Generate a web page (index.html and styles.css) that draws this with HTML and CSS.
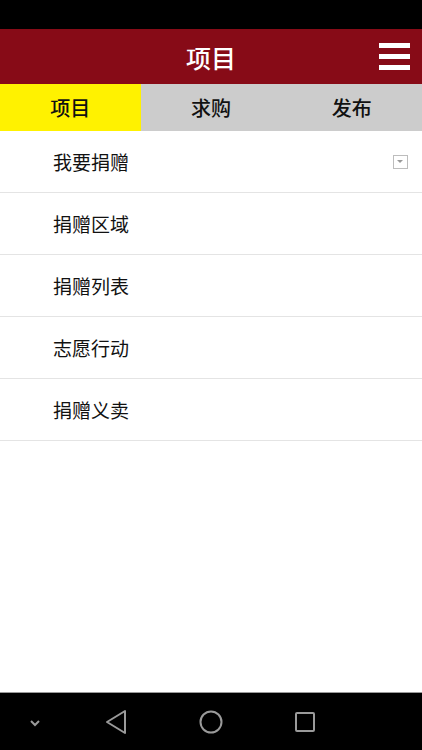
FILE: index.html
```html
<!DOCTYPE html>
<html lang="zh-CN">
<head>
    <meta charset="UTF-8">
    <meta name="viewport" content="width=device-width, initial-scale=1.0">
    <title>项目</title>
    <link rel="stylesheet" href="styles.css">
</head>
<body>
    <div class="status-bar"></div>

    <div class="header">
        <h1>项目</h1>
        <div class="menu-btn">
            <span></span>
            <span></span>
            <span></span>
        </div>
    </div>

    <div class="tabs">
        <div class="tab active">项目</div>
        <div class="tab">求购</div>
        <div class="tab">发布</div>
    </div>

    <ul class="list">
        <li>
            <span>我要捐赠</span>
            <span class="dropdown"></span>
        </li>
        <li><span>捐赠区域</span></li>
        <li><span>捐赠列表</span></li>
        <li><span>志愿行动</span></li>
        <li><span>捐赠义卖</span></li>
    </ul>

    <div class="nav-bar">
        <svg class="nav-icon nav-hide" width="40" height="40" viewBox="0 0 40 40">
            <polyline points="16,19 20,23 24,19" fill="none" stroke="#9a9a9a" stroke-width="2"/>
        </svg>
        <svg class="nav-icon nav-back" width="40" height="40" viewBox="0 0 40 40">
            <polygon points="28,9 28,31 10,20" fill="none" stroke="#9a9a9a" stroke-width="2" stroke-linejoin="round"/>
        </svg>
        <svg class="nav-icon" width="40" height="40" viewBox="0 0 40 40">
            <circle cx="20" cy="20" r="10.5" fill="none" stroke="#9a9a9a" stroke-width="2"/>
        </svg>
        <svg class="nav-icon" width="40" height="40" viewBox="0 0 40 40">
            <rect x="11" y="11" width="18" height="18" rx="1" fill="none" stroke="#9a9a9a" stroke-width="2"/>
        </svg>
    </div>
</body>
</html>
```

FILE: styles.css
```css
html, body {
    margin: 0;
    padding: 0;
}
body {
    font-family: "Noto Sans CJK SC", "Noto Sans", sans-serif;
    background-color: #fff;
    color: #111;
    width: 422px;
    height: 750px;
    display: flex;
    flex-direction: column;
    overflow: hidden;
}
.status-bar {
    height: 29px;
    background-color: #000;
}
.header {
    height: 55px;
    background-color: #870b17;
    display: flex;
    align-items: center;
    justify-content: center;
    position: relative;
}
.header h1 {
    margin: 0;
    color: #fff;
    font-size: 25px;
    font-weight: 500;
}
.menu-btn {
    position: absolute;
    right: 12px;
    top: 14px;
    width: 31px;
    display: flex;
    flex-direction: column;
    gap: 6px;
}
.menu-btn span {
    display: block;
    height: 5px;
    background-color: #fff;
}
.tabs {
    height: 47px;
    display: flex;
    background-color: #cccccc;
}
.tab {
    flex: 1;
    display: flex;
    align-items: center;
    justify-content: center;
    font-size: 20px;
    font-weight: 500;
}
.tab.active {
    background-color: #fff200;
}
.list {
    list-style: none;
    margin: 0;
    padding: 0;
    flex: 1;
}
.list li {
    height: 61px;
    border-bottom: 1px solid #e4e4e4;
    display: flex;
    align-items: center;
    justify-content: space-between;
    padding: 0 14px 0 53px;
    font-size: 19px;
}
.dropdown {
    width: 13px;
    height: 12px;
    border: 1px solid #bdbdbd;
    position: relative;
}
.dropdown::after {
    content: "";
    position: absolute;
    left: 3px;
    top: 4px;
    border-left: 3.5px solid transparent;
    border-right: 3.5px solid transparent;
    border-top: 3px solid #999;
}
.nav-bar {
    height: 57px;
    background-color: #000;
    border-top: 1px solid #9a9a9a;
    display: flex;
    align-items: center;
    padding-left: 15px;
    gap: 54px;
}
.nav-bar .nav-back {
    margin-left: -12px;
}
```
